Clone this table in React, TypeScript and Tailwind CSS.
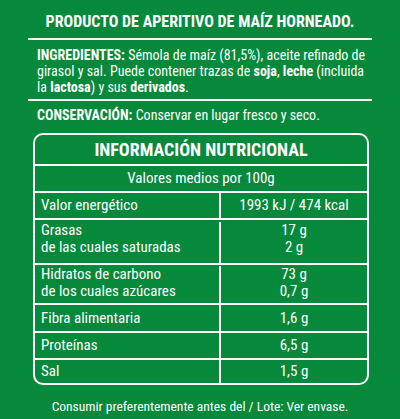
import React from 'react';

const rows = [
  { label: ['Valor energético'], value: ['1993 kJ / 474 kcal'], h: 'h-[27px]' },
  { label: ['Grasas', 'de las cuales saturadas'], value: ['17 g', '2 g'], h: 'h-[45px] pt-[2px]' },
  { label: ['Hidratos de carbono', 'de los cuales azúcares'], value: ['73 g', '0,7 g'], h: 'h-[40px] pt-[1px]' },
  { label: ['Fibra alimentaria'], value: ['1,6 g'], h: 'h-[28px]' },
  { label: ['Proteínas'], value: ['6,5 g'], h: 'h-[27px]' },
  { label: ['Sal'], value: ['1,5 g'], h: 'h-[23px]' },
];

const App = () => {
  return (
    <div className="w-[400px] h-[419px] bg-[#06893b] text-white overflow-hidden font-['Roboto_Condensed',_'DejaVu_Sans_Condensed',_sans-serif]">
      {/* Title */}
      <div className="pt-[12px] text-center font-bold text-[16px] leading-[20px]">
        PRODUCTO DE APERITIVO DE MAÍZ HORNEADO.
      </div>
      <div className="mx-[28px] mt-[6px] h-[2px] bg-white" />

      {/* Ingredients */}
      <p className="pl-[37px] pr-[30px] pt-[7px] text-[14px] leading-[16px] whitespace-nowrap">
        <b>INGREDIENTES:</b> Sémola de maíz (81,5%), aceite refinado de
        <br />
        girasol y sal. Puede contener trazas de <b>soja</b>, <b>leche</b> (incluida
        <br />
        la <b>lactosa</b>) y sus <b>derivados</b>.
      </p>
      <div className="mx-[28px] mt-[4px] h-[2px] bg-white" />

      <p className="px-[37px] pt-[6px] text-[14px] leading-[16px]">
        <b>CONSERVACIÓN:</b> Conservar en lugar fresco y seco.
      </p>

      {/* Nutrition table */}
      <div className="mx-[33px] mt-[10px] w-[336px] border-2 border-white rounded-[10px] overflow-hidden">
        <div className="h-[31px] flex items-center justify-center font-bold text-[18px] border-b-2 border-white">
          INFORMACIÓN NUTRICIONAL
        </div>
        <div className="h-[27px] flex items-center justify-center text-[15px] border-b-2 border-white">
          Valores medios por 100g
        </div>
        {rows.map((r, i) => (
          <div
            key={i}
            className={`flex text-[15px] leading-[17px] ${r.h} ${i < rows.length - 1 ? 'border-b-2 border-white' : ''}`}
          >
            <div
              className={`w-[186px] pl-[6px] border-r-2 border-white flex flex-col ${r.label.length > 1 ? '' : 'justify-center'}`}
            >
              {r.label.map((l) => (
                <div key={l}>{l}</div>
              ))}
            </div>
            <div className={`flex-1 flex flex-col items-center ${r.label.length > 1 ? '' : 'justify-center'}`}>
              {r.value.map((v) => (
                <div key={v}>{v}</div>
              ))}
            </div>
          </div>
        ))}
      </div>

      <div className="mt-[13px] text-center text-[13.5px] leading-[16px]">
        Consumir preferentemente antes del / Lote: Ver envase.
      </div>
    </div>
  );
};

export default App;
